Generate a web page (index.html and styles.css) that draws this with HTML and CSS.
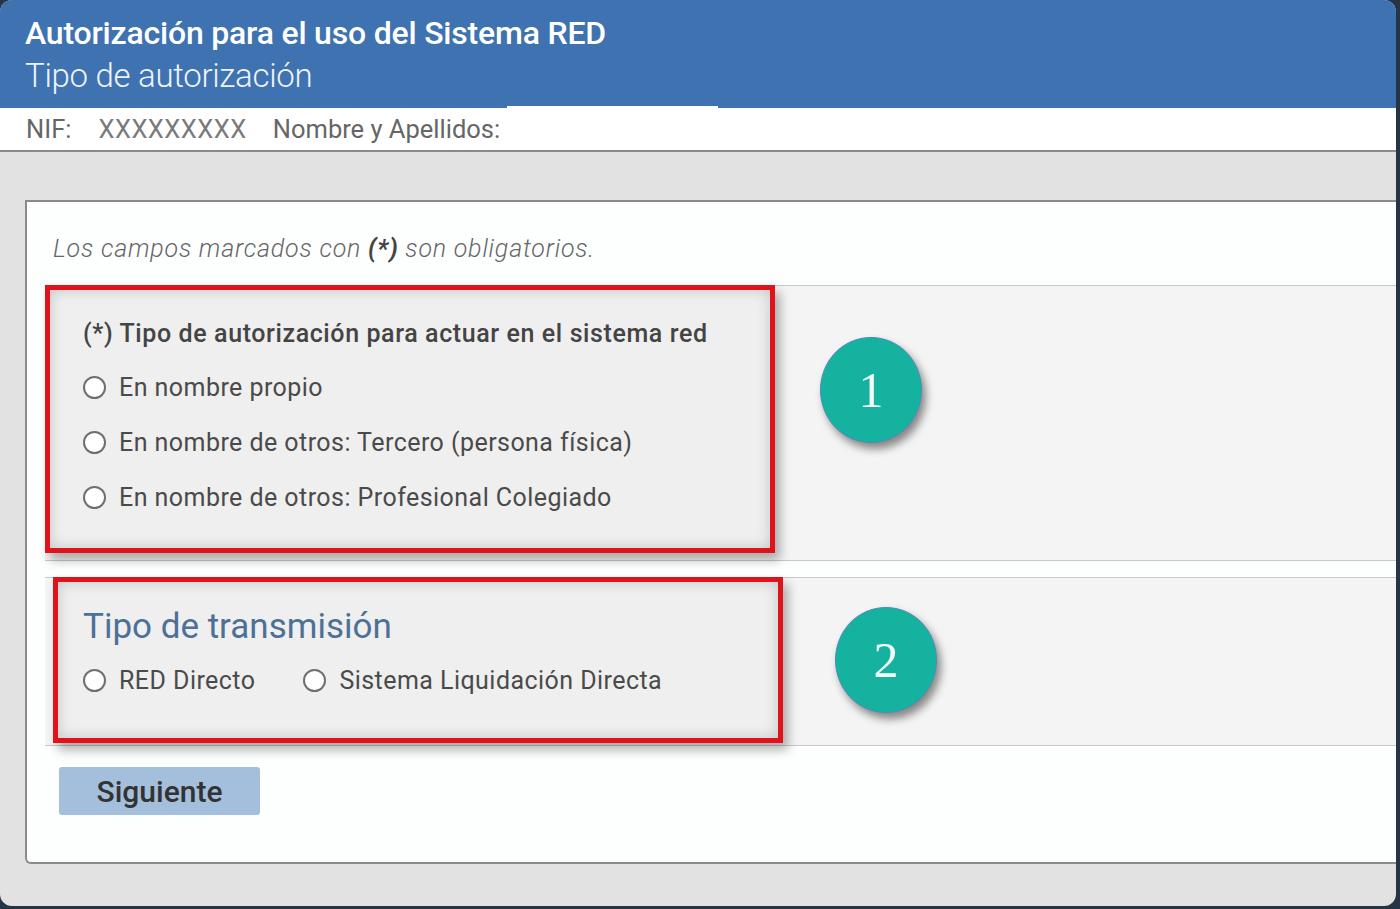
FILE: index.html
```html
<!DOCTYPE html>
<html lang="es">
  <head>
    <meta charset="UTF-8" />
    <meta name="viewport" content="width=device-width, initial-scale=1.0" />
    <title>Autorización Sistema RED</title>
    <link rel="stylesheet" href="styles.css">
  </head>
  <body>
    <div class="screen">
      <div class="header">
        <h1 class="title">Autorización para el uso del Sistema RED</h1>
        <h2 class="subtitle">Tipo de autorización</h2>
      </div>

      <div class="idbar">
        <span class="id-label">NIF:</span>
        <span class="id-value">XXXXXXXXX</span>
        <span class="id-label">Nombre y Apellidos:</span>
        <div class="redact"></div>
      </div>

      <div class="main">
        <div class="card">
          <p class="note">Los campos marcados con <b>(*)</b> son obligatorios.</p>

          <div class="panel panel-auth">
            <div class="redbox box-auth">
              <div class="field-title">(*) Tipo de autorización para actuar en el sistema red</div>
              <label class="option"><span class="radio"></span>En nombre propio</label>
              <label class="option"><span class="radio"></span>En nombre de otros: Tercero (persona física)</label>
              <label class="option"><span class="radio"></span>En nombre de otros: Profesional Colegiado</label>
            </div>
            <div class="badge badge-1">1</div>
          </div>

          <div class="panel panel-trans">
            <div class="redbox box-trans">
              <div class="section-title">Tipo de transmisión</div>
              <div class="option-row">
                <label class="option inline"><span class="radio"></span>RED Directo</label>
                <label class="option inline"><span class="radio"></span>Sistema Liquidación Directa</label>
              </div>
            </div>
            <div class="badge badge-2">2</div>
          </div>

          <button class="btn-next">Siguiente</button>
        </div>
      </div>
    </div>
  </body>
</html>
```

FILE: styles.css
```css
body {
  margin: 0;
  background: #243547;
  font-family: Roboto, "Liberation Sans", sans-serif;
}
.screen {
  width: 1396px;
  height: 906px;
  border-radius: 12px;
  overflow: hidden;
  background: #e2e2e2;
}
.header {
  background: #3f72b1;
  height: 108px;
  box-sizing: border-box;
  padding: 13px 0 0 25px;
  color: #fff;
}
.title {
  margin: 0;
  font-size: 32px;
  font-weight: 500;
  letter-spacing: -0.2px;
  line-height: 40px;
}
.subtitle {
  margin: 3px 0 0;
  font-size: 33px;
  font-weight: 300;
  letter-spacing: -0.3px;
  line-height: 40px;
  color: #eef3fa;
}
.idbar {
  position: relative;
  height: 42px;
  background: #fff;
  border-bottom: 2px solid #8b8b8b;
  display: flex;
  align-items: center;
  padding-left: 26px;
  font-size: 25.5px;
  letter-spacing: 0;
  color: #666;
}
.id-value {
  color: #7a7a7a;
  margin: 0 26px 0 27px;
  letter-spacing: 0.5px;
}
.redact {
  position: absolute;
  left: 507px;
  top: -2px;
  width: 211px;
  height: 35px;
  background: #fff;
}
.main {
  padding: 48px 0 0 25px;
}
.card {
  height: 664px;
  box-sizing: border-box;
  background: #fdfefe;
  border: 2px solid #8a8a8a;
  border-right: none;
  border-radius: 0 0 0 6px;
  padding-top: 1px;
}
.note {
  margin: 31px 0 22px 26px;
  font-size: 25px;
  font-style: italic;
  font-weight: 300;
  color: #666;
  letter-spacing: 0.8px;
}
.note b {
  font-weight: 700;
  color: #444;
}
.panel {
  margin-left: 18px;
  background: #f4f4f4;
  border-top: 1px solid #c6cacd;
  border-bottom: 1px solid #c6cacd;
  display: flex;
  align-items: flex-start;
}
.panel-auth {
  height: 276px;
  box-sizing: border-box;
}
.panel-trans {
  height: 169px;
  box-sizing: border-box;
  margin-top: 16px;
}
.redbox {
  width: 730px;
  box-sizing: border-box;
  border: 5px solid #e0131b;
  background: #efefef;
  box-shadow: 5px 7px 10px rgba(0, 0, 0, 0.3), inset 0 0 14px rgba(0, 0, 0, 0.18);
  margin-top: -1px;
}
.box-auth {
  height: 268px;
  padding: 30px 0 0 33px;
}
.box-trans {
  height: 166px;
  margin-left: 8px;
  padding: 25px 0 0 25px;
}
.field-title {
  font-size: 25px;
  font-weight: 500;
  color: #444;
  letter-spacing: 0.6px;
  line-height: 28px;
  margin-bottom: 12px;
}
.option {
  display: flex;
  align-items: center;
  font-size: 25px;
  color: #4a4a4a;
  letter-spacing: 0.45px;
  height: 55px;
}
.option-row {
  display: flex;
  margin-top: 13px;
}
.option.inline {
  margin-right: 48px;
  height: 40px;
}
.radio {
  width: 19px;
  height: 19px;
  border: 2px solid #6f6f6f;
  border-radius: 50%;
  background: #fff;
  margin-right: 13px;
  flex-shrink: 0;
}
.section-title {
  font-size: 35px;
  font-weight: 400;
  color: #4d7196;
  letter-spacing: 0;
  line-height: 40px;
}
.badge {
  width: 100px;
  height: 104px;
  border-radius: 50%;
  background: #15b39f;
  border: 1px solid #4b8db5;
  color: #f4fbff;
  font-family: "Liberation Serif", serif;
  font-size: 50px;
  display: flex;
  align-items: center;
  justify-content: center;
  box-shadow: 4px 6px 9px rgba(0, 0, 0, 0.45);
}
.badge-1 {
  margin: 51px 0 0 45px;
}
.badge-2 {
  margin: 29px 0 0 52px;
}
.btn-next {
  display: block;
  margin: 21px 0 0 32px;
  width: 201px;
  height: 48px;
  border: none;
  border-radius: 3px;
  background: #a4bfdc;
  color: #333;
  font-family: Roboto, "Liberation Sans", sans-serif;
  font-size: 30px;
  font-weight: 500;
  letter-spacing: 0;
}
```
